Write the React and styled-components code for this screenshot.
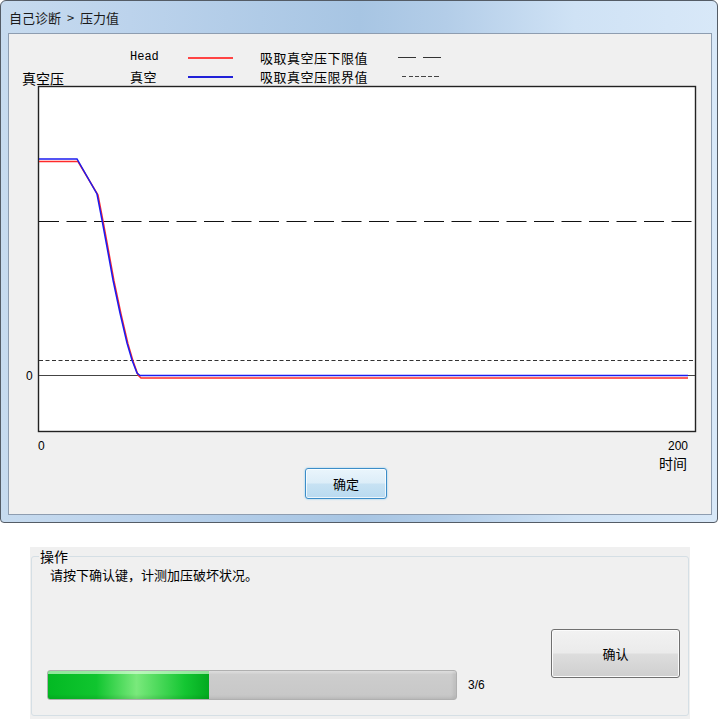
import React from 'react';
import styled, { createGlobalStyle, css } from 'styled-components';

const GlobalStyle = createGlobalStyle`
  html, body {
    margin:0;
    padding:0;
    background:#fff;
  }
  body {
    font-family:"Noto Sans CJK SC", "Liberation Sans", sans-serif;
    font-size:13px;
    color:#000;
  }
`;

const Page = styled.div`
  width:720px;
  height:719px;
  overflow:hidden;
`;

const Window = styled.div`
  box-sizing:border-box;
  width:718px;
  height:523px;
  border:1px solid #545c66;
  border-radius:6px 6px 4px 4px;
  padding:0 5px 7px 7px;
  background:linear-gradient(to right, #c7dbef 0%, #bcd3ec 18%, #a7c5e3 50%, #b3cde8 62%, #cfe2f5 80%, #d8e8f8 100%);
  display:flex;
  flex-direction:column;
`;

const TitleBar = styled.div`
  height:32px;
  display:flex;
  align-items:center;
  padding-left:1px;
  font-size:13px;
  word-spacing:3px;
  color:#1a1a1a;
`;

const Client = styled.div`
  flex:1;
  border:1px solid #8e9db0;
  background:#f0f0f0;
  display:flex;
  flex-direction:column;
`;

const Header = styled.div`
  height:52px;
  display:flex;
  align-items:flex-end;
`;

const YTitle = styled.div`
  box-sizing:border-box;
  width:121px;
  padding-left:13px;
  font-size:14px;
  line-height:16px;
`;

const Legend = styled.div`
  display:grid;
  grid-template-columns:58px 72px 138px 45px;
  grid-auto-rows:19px;
  align-items:center;
`;

const LegendName = styled.div`
  font-size:13px;
  line-height:19px;
  letter-spacing:0.5px;
  ${p => p.$mono && css`
    font-family:"Liberation Mono", monospace;
    font-size:12px;
    letter-spacing:0;
  `}
`;

const Swatch = styled.div`
  width:45px;
  height:2px;
  background:${p => p.$color};
`;

const LegendLabel = styled.div`
  font-size:13px;
  line-height:19px;
  letter-spacing:0.5px;
`;

const Pattern = styled.div`
  height:1px;
  ${p => p.$kind === 'dash' ? css`
    width:43px;
    background:linear-gradient(to right, #333 0 18px, transparent 18px 25px, #333 25px 43px);
  ` : css`
    width:38px;
    margin-left:4px;
    background:repeating-linear-gradient(to right, #444 0 4px, transparent 4px 6.5px);
  `}
`;

const ChartSvg = styled.svg`
  display:block;
  overflow:visible;
  font-family:"Liberation Sans", sans-serif;
  font-size:12px;
`;

const TimeRow = styled.div`
  display:flex;
  justify-content:flex-end;
  padding-right:24px;
  margin-top:3px;
  font-size:14px;
  line-height:16px;
`;

const ButtonRow = styled.div`
  margin-top:-3px;
  padding-left:296px;
`;

const PushButton = styled.button`
  box-sizing:border-box;
  width:${p => p.$w}px;
  height:${p => p.$h}px;
  padding:0;
  border-radius:3px;
  font-family:"Noto Sans CJK SC", sans-serif;
  font-size:13px;
  color:#000;
  ${p => p.$focused ? css`
    border:1px solid #3c8dc8;
    background:linear-gradient(#eaf5fc 0%, #dcedf8 48%, #c7e2f3 52%, #b9daf0 100%);
    box-shadow:inset 0 0 0 1px rgba(255,255,255,0.75), 0 0 2px #7cc4ef;
  ` : css`
    border:1px solid #707070;
    background:linear-gradient(#f2f2f2 0%, #ebebeb 48%, #dddddd 52%, #cfcfcf 100%);
    box-shadow:inset 0 0 0 1px #fbfbfb;
  `}
`;

const Panel = styled.div`
  box-sizing:border-box;
  margin:24px 0 0 30px;
  width:660px;
  height:172px;
  padding:1px 1px 0;
  background:#f0f0f0;
`;

const GroupBox = styled.fieldset`
  box-sizing:border-box;
  margin:0;
  height:168px;
  padding:0 8px 14px 15px;
  border:1px solid #d5dfe5;
  border-radius:3px;
`;

const Caption = styled.legend`
  margin-left:-8px;
  padding:0 1px;
  font-size:14px;
  line-height:16px;
`;

const Instruction = styled.div`
  margin:3px 0 0 3px;
  font-size:13px;
  line-height:16px;
`;

const BottomRow = styled.div`
  margin-top:46px;
  display:flex;
  align-items:flex-end;
`;

const ProgressGroup = styled.div`
  display:flex;
  align-items:center;
  gap:11px;
`;

const Track = styled.div`
  box-sizing:border-box;
  width:410px;
  height:30px;
  border:1px solid #b0b0b0;
  border-radius:3px;
  overflow:hidden;
  background:linear-gradient(#e4e4e4 0, #cdcdcd 12%, #c8c8c8 85%, #bdbdbd 100%);
  box-shadow:inset -3px 0 3px rgba(0,0,0,0.06);
`;

const Fill = styled.div`
  height:100%;
  background:
    linear-gradient(to bottom, rgba(220,255,220,0.65) 0, rgba(220,255,220,0.65) 3px, transparent 3px, transparent 82%, rgba(0,60,0,0.12) 100%),
    linear-gradient(to right, #03b923 0%, #10c52f 30%, #7ae97c 55%, #14c632 85%, #02aa1f 100%);
`;

const Count = styled.div`
  font-family:"Liberation Sans", sans-serif;
  font-size:12px;
`;

const blue = [[30,73],[68,73],[88,108],[93,134],[98,161],[104,194],[111,227],[118,257],[123,274],[128,287],[131,289.5],[679,289.5]];
const red = [[30,75.5],[69,75.5],[89,109],[94,135],[99,162],[105,195],[112,228],[119,258],[124,275],[129,289],[132,292],[679,292]];
const toPoints = pts => pts.map(p => p.join(',')).join(' ');

const PressureChart = () => (
  <ChartSvg width="702" height="366" viewBox="0 0 702 366">
    <rect x="29.5" y="0.5" width="657" height="345" fill="#fff" stroke="#222" strokeWidth="1.4" />
    <line x1="30" y1="135.5" x2="686" y2="135.5" stroke="#111" strokeDasharray="20 7.5" />
    <line x1="30" y1="274.5" x2="686" y2="274.5" stroke="#333" strokeDasharray="4 2.5" />
    <line x1="30" y1="289.5" x2="686" y2="289.5" stroke="#444" />
    <polyline points={toPoints(red)} fill="none" stroke="#ff2a2a" strokeWidth="1.5" />
    <polyline points={toPoints(blue)} fill="none" stroke="#1c1cf0" strokeWidth="1.5" />
    <text x="17" y="294">0</text>
    <text x="29" y="364">0</text>
    <text x="679" y="364" textAnchor="end">200</text>
  </ChartSvg>
);

const App = () => {
  const step = 3;
  const total = 6;
  return (
    <Page>
      <GlobalStyle />
      <Window>
        <TitleBar>自己诊断 &gt; 压力值</TitleBar>
        <Client>
          <Header>
            <YTitle>真空压</YTitle>
            <Legend>
              <LegendName $mono>Head</LegendName>
              <Swatch $color="#ff4444" />
              <LegendLabel>吸取真空压下限值</LegendLabel>
              <Pattern $kind="dash" />
              <LegendName>真空</LegendName>
              <Swatch $color="#2020d8" />
              <LegendLabel>吸取真空压限界值</LegendLabel>
              <Pattern $kind="dot" />
            </Legend>
          </Header>
          <PressureChart />
          <TimeRow>时间</TimeRow>
          <ButtonRow>
            <PushButton $w={82} $h={31} $focused>确定</PushButton>
          </ButtonRow>
        </Client>
      </Window>
      <Panel>
        <GroupBox>
          <Caption>操作</Caption>
          <Instruction>请按下确认键，计测加压破坏状况。</Instruction>
          <BottomRow>
            <ProgressGroup>
              <Track>
                <Fill style={{ width: `${(step / total) * 79}%` }} />
              </Track>
              <Count>{step}/{total}</Count>
            </ProgressGroup>
            <PushButton $w={129} $h={49} style={{ marginLeft: 'auto', marginBottom: 22 }}>确认</PushButton>
          </BottomRow>
        </GroupBox>
      </Panel>
    </Page>
  );
};

export default App;
